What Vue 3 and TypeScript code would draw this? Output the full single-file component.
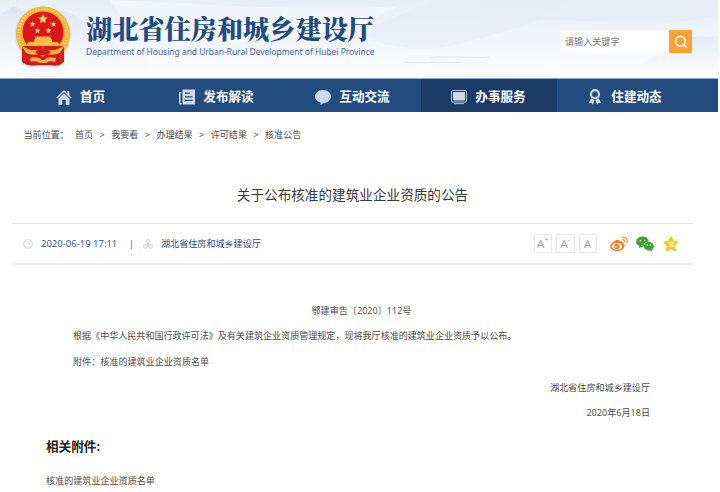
<script setup lang="ts">
interface NavItem { label: string; icon: string; active?: boolean }

const navItems: NavItem[] = [
  { label: '首页', icon: 'home' },
  { label: '发布解读', icon: 'news' },
  { label: '互动交流', icon: 'chat' },
  { label: '办事服务', icon: 'screen', active: true },
  { label: '住建动态', icon: 'medal' },
]
const crumbs: string[] = ['首页', '我要看', '办理结果', '许可结果', '核准公告']
const sizes: string[] = ['+', '-', '']
</script>

<template>
  <div class="page">
    <header class="header">
      <svg class="scenery" viewBox="0 0 718 78" preserveAspectRatio="none">
        <defs>
          <linearGradient id="sky" x1="0" y1="0" x2="0" y2="1">
            <stop offset="0" stop-color="#e8eef8" />
            <stop offset=".5" stop-color="#f1f5fb" />
            <stop offset="1" stop-color="#fdfdfe" />
          </linearGradient>
          <linearGradient id="ridge" x1="0" y1="0" x2="0" y2="1">
            <stop offset="0" stop-color="#d9e4f2" />
            <stop offset="1" stop-color="#f8fafd" stop-opacity="0" />
          </linearGradient>
          <linearGradient id="hill" x1="0" y1="0" x2="0" y2="1">
            <stop offset="0" stop-color="#dfe9f5" />
            <stop offset="1" stop-color="#f8fafd" stop-opacity="0" />
          </linearGradient>
        </defs>
        <rect width="718" height="78" fill="url(#sky)" />
        <path d="M0 14 L14 6 L26 12 L44 22 L62 10 L76 16 L96 30 L120 46 L150 62 V78 H0Z" fill="url(#ridge)" opacity=".8" />
        <path d="M110 0 C220 4 300 12 400 6 L350 30 L230 44 L130 30Z" fill="#f9fbfd" opacity=".5" />
        <path d="M360 34 C390 18 400 16 416 8 L436 0 H570 C550 20 500 34 450 46 C420 53 380 46 360 34Z" fill="#e4ecf6" opacity=".45" />
        <path d="M480 0 H718 V16 C650 32 560 12 480 24Z" fill="#e3eaf5" opacity=".4" />
        <path d="M610 78 C650 60 676 46 690 38 C700 34 710 38 718 36 V78Z" fill="url(#hill)" opacity=".8" />
        <path d="M404 62.500 H462 M430 58 C450 55 470 59 490 57" fill="none" stroke="#e3eaf3" stroke-width="1" />
      </svg>
      <div class="header-row">
        <svg class="emblem" viewBox="0 0 56 60">
          <path d="M8 38 L7 56 Q14 61 22 59 H36 Q45 61 49 55 L48 38Z" fill="#cb1717" />
          <ellipse cx="28" cy="28" rx="27" ry="27.500" fill="#efb63c" />
          <ellipse cx="28" cy="28" rx="24.500" ry="25" fill="none" stroke="#f9cb58" stroke-width="2.500" stroke-dasharray="1.500 1.500" />
          <circle cx="28" cy="26" r="20.500" fill="#dc161b" />
          <path d="M28 8 l1.400 3.200 3.500.3 -2.700 2.300 .8 3.400 -3-1.800 -3 1.800 .8-3.400 -2.700-2.300 3.500-.3Z M17.500 15 l.9 2 2.200.2 -1.700 1.400 .5 2.200 -1.900-1.100 -1.900 1.100 .5-2.200 -1.700-1.400 2.200-.2Z M38.500 15 l.9 2 2.200.2 -1.700 1.400 .5 2.200 -1.900-1.100 -1.900 1.100 .5-2.200 -1.700-1.400 2.200-.2Z M22.500 21.500 l.9 2 2.200.2 -1.700 1.400 .5 2.200 -1.900-1.100 -1.900 1.100 .5-2.200 -1.700-1.400 2.200-.2Z M33.500 21.500 l.9 2 2.200.2 -1.700 1.400 .5 2.200 -1.900-1.100 -1.900 1.100 .5-2.200 -1.700-1.400 2.200-.2Z" fill="#fbd769" />
          <path d="M19 34 L21 30.500 H35 L37 34 V36 H43 L45 41 H11 L13 36 H19Z" fill="#f3bd48" />
          <path d="M7 40 H49 L49 56 Q28 61 7 56Z" fill="#d31b1b" />
          <path d="M6 39 Q17 47 27 43 L28 41 L29 43 Q39 47 50 39 L45 47 Q37 50 32 48 L28 51 L24 48 Q17 50 11 47Z" fill="#efb140" />
          <path d="M20 46 Q28 39 36 46 L32 49 H24Z" fill="#d51b1b" />
          <path d="M15 52 Q23 50 27 54 H29 Q33 50 41 52 L40 56 Q35 54 31 57 H25 Q21 54 16 56Z" fill="#edb044" />
        </svg>
        <div class="brand">
          <div class="brand-cn">湖北省住房和城乡建设厅</div>
          <svg class="brand-en" viewBox="0 0 290 14">
            <text x="0" y="10" textLength="288.500" lengthAdjust="spacingAndGlyphs">Department of Housing and Urban-Rural Development of Hubei Province</text>
          </svg>
        </div>
        <div class="search">
          <span class="search-field">请输入关键字</span>
          <span class="search-btn">
            <svg viewBox="0 0 14 14"><circle cx="6.400" cy="6.300" r="4.900" /><path d="M9.200 9.500 L12.300 12.400" /></svg>
          </span>
        </div>
      </div>
    </header>

    <nav class="nav">
      <div v-for="item in navItems" :key="item.label" class="nav-item" :class="{ active: item.active }">
        <svg class="nav-icon" viewBox="0 0 16 16">
          <template v-if="item.icon === 'home'">
            <path d="M0.300 8.500 L8 1 L11.300 4.200 V2 H13.300 V6.100 L15.700 8.500 L14.700 9.500 L8 3 L1.300 9.500Z" />
            <path d="M2.500 9.500 L8 4.300 L13.500 9.500 V16 H9.800 V11 H6.200 V16 H2.500Z" />
          </template>
          <template v-else-if="item.icon === 'news'">
            <path fill-rule="evenodd" d="M3.500 .5 H16 V15.500 H3.500Z M6 3.500 V4.800 H11 V3.500Z M6 7.200 V8.500 H13.500 V7.200Z M6 10.800 V12.100 H13.500 V10.800Z" />
            <path d="M0 3 H2.500 V4.500 H1.500 V14 H2.500 V15.500 H1.500 Q0 15.500 0 14Z" />
          </template>
          <template v-else-if="item.icon === 'chat'">
            <path d="M8 1 C12.700 1 16 3.900 16 7.500 C16 11.100 12.700 13.900 9 14 L5.600 16 L5.700 13.500 C2.200 12.700 0 10.500 0 7.500 C0 3.900 3.300 1 8 1Z" />
          </template>
          <template v-else-if="item.icon === 'screen'">
            <rect x=".5" y="1.500" width="15" height="11.500" rx="1" fill="none" stroke="#b7c4d6" />
            <rect x="2" y="3" width="12" height="8.500" />
            <path d="M3 14 H13 V15.200 H3Z" opacity=".75" />
          </template>
          <template v-else>
            <circle cx="8" cy="5.200" r="4" fill="none" stroke="#cedaec" stroke-width="2.200" />
            <path d="M4.300 9.300 L7.600 11 L6 16 L4.500 13.800 L1.500 14.500Z M11.700 9.300 L8.400 11 L10 16 L11.500 13.800 L14.500 14.500Z" />
          </template>
        </svg>
        <span>{{ item.label }}</span>
      </div>
    </nav>

    <div class="crumbs">
      <span class="crumb-label">当前位置：</span>
      <template v-for="(crumb, i) in crumbs" :key="crumb">
        <span v-if="i > 0" class="sep">&gt;</span>
        <span>{{ crumb }}</span>
      </template>
    </div>

    <main class="article">
      <h1 class="title">关于公布核准的建筑业企业资质的公告</h1>

      <div class="meta">
        <svg class="meta-icon" viewBox="0 0 10 10"><circle cx="5" cy="5" r="4.400" /><path d="M5 2 V5.300 H7" /></svg>
        <span class="date">2020-06-19 17:11</span>
        <span class="bar">|</span>
        <svg class="meta-icon" viewBox="0 0 10 10"><circle cx="5" cy="2.700" r="2" /><circle cx="2.500" cy="7.300" r="2" /><circle cx="7.500" cy="7.300" r="2" /><path d="M5 4.700 V6 M3.500 5.500 L5 6 L6.500 5.500" /></svg>
        <span>湖北省住房和城乡建设厅</span>
        <div class="tools">
          <span v-for="s in sizes" :key="s" class="size">A<sup v-if="s">{{ s }}</sup></span>
        </div>
        <div class="share">
          <svg viewBox="0 0 18 16">
            <path d="M7.300 3.800 C8.600 3.300 9.600 4 9.200 5.500 C11.200 4.800 13.100 5 12.700 7 C14.100 7.500 14.800 8.400 14.600 9.800 C14.200 13 11 15.200 7.200 15.200 C3.200 15.200 .2 13.200 .2 10.300 C.2 7.600 4.500 4.500 7.300 3.800Z" fill="#f1802c" />
            <ellipse cx="7.100" cy="10.400" rx="5.100" ry="3.300" fill="#fff" />
            <circle cx="6.700" cy="10.500" r="2.700" fill="#f1802c" /><circle cx="6" cy="11.100" r=".9" fill="#fff" />
            <path d="M11.900 1.200 C15.600 .4 18 3.300 17 6.500 M12.400 3.600 C14.200 3.400 15.200 4.600 14.700 6.100" fill="none" stroke="#f79a42" stroke-width="1.300" stroke-linecap="round" />
          </svg>
          <svg viewBox="0 0 18 16">
            <path d="M6.600 .6 C10.200 .6 12.600 2.900 12.700 5.400 C9.600 5.500 7.400 7.500 7.600 10.800 L5.500 10.900 L2.900 12.200 L3.400 10.100 C1.600 9.200 .2 7.700 .2 5.700 C.2 2.900 3.100 .6 6.600 .6Z" fill="#3ba534" />
            <path d="M12.800 6.100 C15.700 6.100 17.900 8 17.900 10.300 C17.900 11.800 17 13.200 15.900 13.900 L16.200 15.500 L14.200 14.600 C10.700 15 7.900 12.900 7.900 10.300 C7.900 8 10.100 6.100 12.800 6.100Z" fill="#3ba534" />
            <g fill="#fff"><circle cx="4.400" cy="4.500" r=".8" /><circle cx="8.600" cy="4.500" r=".8" /><circle cx="11.200" cy="9" r=".7" /><circle cx="14.500" cy="9" r=".7" /></g>
          </svg>
          <svg viewBox="0 0 18 16">
            <path d="M9 .6 L11.200 5.200 L16.200 6 L12.700 9.600 L13.500 15 L9 12.700 L4.500 15 L5.300 9.600 L1.800 6 L6.800 5.200Z" fill="#f7c70c" stroke="#f7c70c" stroke-linejoin="round" />
            <path d="M5.900 7 Q9 6.300 11.600 7.100 L7.700 10.100 Q10.300 10.700 13 10.300" fill="none" stroke="#fff8d6" stroke-width="1.200" />
          </svg>
        </div>
      </div>

      <div class="content">
        <p class="number">鄂建审告〔2020〕112号</p>
        <p class="indent body-line">根据《中华人民共和国行政许可法》及有关建筑企业资质管理规定，现将我厅核准的建筑业企业资质予以公布。</p>
        <p class="indent">附件：核准的建筑业企业资质名单</p>
        <p class="sign">湖北省住房和城乡建设厅</p>
        <p class="sign">2020年6月18日</p>
      </div>

      <section class="files">
        <h2>相关附件:</h2>
        <div class="file">核准的建筑业企业资质名单</div>
      </section>
    </main>
  </div>
</template>

<style>
body { margin: 0; background: #fff; overflow: hidden; }
</style>

<style scoped>
.page { width: 718px; height: 492px; overflow: hidden; color: #4c4c4c; font-family: "Open Sans", "Noto Sans CJK SC", sans-serif; font-size: 9.08px; line-height: 14px; white-space: nowrap; }
.header { position: relative; height: 78px; }
.scenery { position: absolute; inset: 0; width: 718px; height: 78px; }
.header-row { position: relative; display: flex; align-items: flex-start; padding: 6px 26px 0 14px; }
.emblem { width: 58px; height: 60px; flex: none; filter: drop-shadow(0 1px 1px #b9c2d2); }
.brand { margin-left: 14px; padding-top: 9px; color: #224b82; }
.brand-cn { font-family: "Noto Serif CJK SC", "Noto Sans CJK SC", serif; font-size: 26.2px; font-weight: 900; line-height: 26px; }
.brand-en { display: block; overflow: visible; width: 290px; height: 14px; margin-top: 4px; font-family: "Noto Sans", sans-serif; font-size: 9.4px; fill: #44689a; }
.search { display: flex; margin-left: auto; margin-top: 24px; height: 23px; }
.search-field { width: 104px; padding-left: 5px; background: #fff; line-height: 23px; color: #777; }
.search-btn { display: flex; align-items: center; justify-content: center; width: 23px; background: #fda136; border-radius: 1px; }
.search-btn svg { width: 14px; height: 14px; fill: none; stroke: #fff; stroke-width: 1.6; }
.nav { display: flex; box-sizing: border-box; height: 34px; padding-left: 12.5px; background: #224b80; border-top: 1px solid #91a9c4; }
.nav-item { display: flex; align-items: center; justify-content: center; gap: 8px; width: 136px; color: #fff; font-family: "Noto Sans CJK SC", sans-serif; font-size: 12.6px; font-weight: 700; }
.nav-item.active { background: #1b3b67; }
.nav-icon { width: 16px; height: 16px; fill: #cedaec; margin-top: 2px; }
.crumbs { display: flex; align-items: center; height: 46px; padding-left: 23.5px; }
.crumb-label { width: 51.500px; }
.sep { width: 18px; text-align: center; }
.title { margin: 0; padding-top: 25px; height: 40px; text-align: center; font-size: 13.62px; font-weight: 400; line-height: 24px; padding-right: 13px; color: #3a3a3a; }
.meta { display: flex; align-items: center; box-sizing: border-box; height: 42px; margin-left: 12px; width: 681px; padding: 0 13px 0 11px; border-top: 1px solid #e8e8e8; border-bottom: 2px solid #f1f1f1; color: #2d4b8c; }
.meta-icon { width: 10px; height: 10px; margin-right: 8px; fill: none; stroke: #c9c9c9; stroke-width: .8; }
.date { width: 88px; font-size: 9.5px; }
.bar { width: 14px; }
.tools { display: flex; gap: 4px; margin-left: auto; }
.size { display: flex; justify-content: center; box-sizing: border-box; width: 18.500px; height: 19px; border: 1px solid #e9e9e9; border-radius: 1px; color: #a0a0a0; font-size: 11.5px; line-height: 17px; }
.size sup { font-size: 7px; line-height: 10px; }
.share { display: flex; gap: 8px; margin-left: 13px; }
.share svg { width: 18px; height: 16px; }
.content { padding-top: 32.6px; }
.content p { margin: 0; height: 25.700px; line-height: 26px; }
.content .number { text-align: center; padding-left: 5px; }
.content .indent { padding-left: 73px; }
.content .body-line { letter-spacing: -.03px; }
.content .sign { text-align: right; padding-right: 68px; }
.files { padding: 11.4px 0 0 46px; }
.files h2 { margin: 0; font-size: 12.6px; line-height: 20px; font-weight: 700; color: #222; }
.file { margin-top: 16.500px; }
</style>
